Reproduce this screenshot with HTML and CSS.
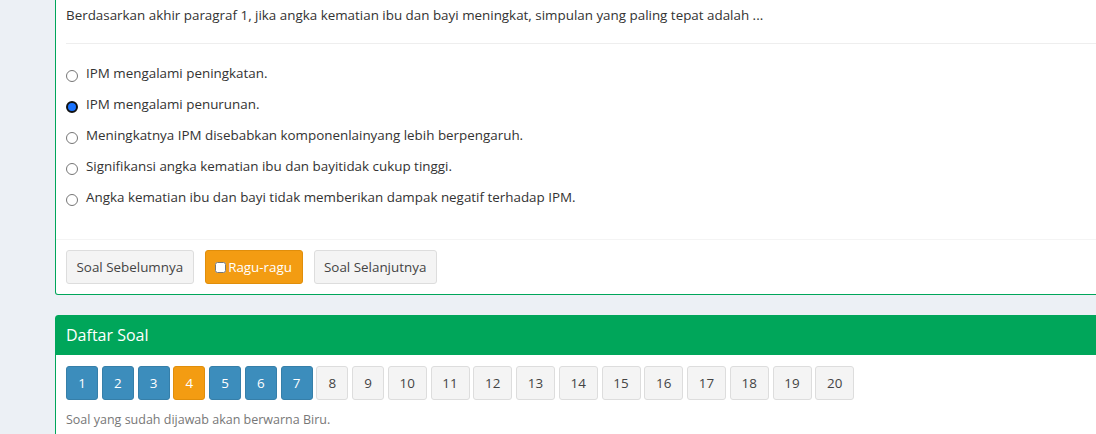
FILE: index.html
```html
<!DOCTYPE html>
<html lang="id">
<head>
<meta charset="utf-8">
<title>Soal</title>
<link rel="stylesheet" href="styles.css">
</head>
<body>
<div class="page">
  <div class="box box-question">
    <div class="box-body">
      <p class="question">Berdasarkan akhir paragraf 1, jika angka kematian ibu dan bayi meningkat, simpulan yang paling tepat adalah ...</p>
      <hr class="divider">
      <div class="options">
        <label class="option"><input type="radio" name="jawab"><span>IPM mengalami peningkatan.</span></label>
        <label class="option"><input type="radio" name="jawab" checked><span>IPM mengalami penurunan.</span></label>
        <label class="option"><input type="radio" name="jawab"><span>Meningkatnya IPM disebabkan komponenlainyang lebih berpengaruh.</span></label>
        <label class="option"><input type="radio" name="jawab"><span>Signifikansi angka kematian ibu dan bayitidak cukup tinggi.</span></label>
        <label class="option"><input type="radio" name="jawab"><span>Angka kematian ibu dan bayi tidak memberikan dampak negatif terhadap IPM.</span></label>
      </div>
    </div>
    <div class="box-footer">
      <button class="btn btn-default nav-prev">Soal Sebelumnya</button>
      <button class="btn btn-warning nav-doubt"><input type="checkbox" class="doubt-check"><span>Ragu-ragu</span></button>
      <button class="btn btn-default nav-next">Soal Selanjutnya</button>
    </div>
  </div>

  <div class="box box-list">
    <div class="box-header">Daftar Soal</div>
    <div class="box-body list-body">
      <div class="nums">
        <button class="btn num btn-primary">1</button>
        <button class="btn num btn-primary">2</button>
        <button class="btn num btn-primary">3</button>
        <button class="btn num btn-warning">4</button>
        <button class="btn num btn-primary">5</button>
        <button class="btn num btn-primary">6</button>
        <button class="btn num btn-primary">7</button>
        <button class="btn num btn-default">8</button>
        <button class="btn num btn-default">9</button>
        <button class="btn num dd btn-default">10</button>
        <button class="btn num dd btn-default">11</button>
        <button class="btn num dd btn-default">12</button>
        <button class="btn num dd btn-default">13</button>
        <button class="btn num dd btn-default">14</button>
        <button class="btn num dd btn-default">15</button>
        <button class="btn num dd btn-default">16</button>
        <button class="btn num dd btn-default">17</button>
        <button class="btn num dd btn-default">18</button>
        <button class="btn num dd btn-default">19</button>
        <button class="btn num dd btn-default">20</button>
      </div>
      <p class="note">Soal yang sudah dijawab akan berwarna Biru.</p>
    </div>
  </div>
</div>
</body>
</html>
```

FILE: styles.css
```css
html, body {
  margin: 0;
  padding: 0;
  overflow: hidden;
}
body {
  background: #ecf0f5;
  font-family: "Open Sans", "Lato", sans-serif;
  font-size: 13.4px;
  line-height: 20px;
  color: #333;
  width: 1096px;
  height: 434px;
}
.page {
  padding-left: 55px;
  width: 1080px;
}
.box {
  background: #fff;
  border: 1px solid #00a65a;
  width: 1060px;
}
.box-question {
  border-top: none;
  border-radius: 0 0 3px 3px;
  margin-bottom: 20px;
}
.box-body {
  padding: 5px 10px 10px;
}
.question {
  margin: 0;
}
.divider {
  border: 0;
  border-top: 1px solid #eee;
  margin: 18px 0 19px;
}
.options {
  display: flex;
  flex-direction: column;
  gap: 11px;
  margin-bottom: 22px;
}
.option {
  display: flex;
  align-items: flex-start;
  cursor: pointer;
}
.option input {
  appearance: none;
  -webkit-appearance: none;
  box-sizing: border-box;
  margin: 7px 8px 0 0;
  width: 12px;
  height: 12px;
  border-radius: 50%;
  border: 1px solid #767676;
  background: #fff;
  flex: none;
}
.option input:checked {
  border: 2px solid #111;
  background: #1a73ff;
}
.box-footer {
  border-top: 1px solid #f4f4f4;
  padding: 10px;
  display: flex;
  gap: 11px;
}
.btn {
  font-family: inherit;
  font-size: 13.4px;
  line-height: 20px;
  height: 34px;
  padding: 6px 12px;
  border: 1px solid transparent;
  border-radius: 3px;
  box-sizing: border-box;
}
.nav-prev,
.nav-next,
.nav-doubt {
  padding: 6px 9.5px;
}
.btn-default {
  background: #f4f4f4;
  color: #444;
  border-color: #ddd;
}
.btn-warning {
  background: #f39c12;
  color: #fff;
  border-color: #e08e0b;
}
.btn-primary {
  background: #3c8dbc;
  color: #fff;
  border-color: #367fa9;
}
.nav-doubt {
  display: flex;
  align-items: center;
}
.doubt-check {
  width: 11px;
  height: 11px;
  margin: 0 2px 0 0;
}
.box-list {
  border-radius: 3px;
}
.box-header {
  background: #00a65a;
  color: #fff;
  font-size: 16px;
  line-height: 19px;
  padding: 10px;
}
.list-body {
  padding: 11px 10px 10px;
}
.nums {
  display: flex;
  gap: 3.75px;
}
.num {
  width: 32px;
  padding: 6px 0;
  text-align: center;
}
.num.dd {
  width: 39px;
}
.note {
  margin: 10px 0 0;
  font-size: 12.5px;
  color: #777;
}
```
